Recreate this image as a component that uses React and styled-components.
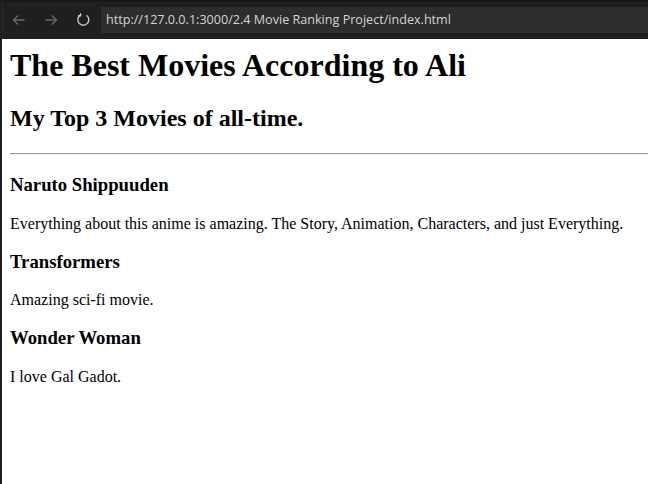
import React from "react";
import styled, { createGlobalStyle } from "styled-components";

const Global = createGlobalStyle`
  html, body { margin: 0; padding: 0; background: #1f1f1f; }
  #root { width: 648px; height: 484px; }
`;

const Window = styled.div`
  width: 648px;
  height: 484px;
  display: flex;
  flex-direction: column;
  background: #1f1f1f;
  border-left: 2px solid #1e1e1e;
  box-sizing: border-box;
  overflow: hidden;
`;

const Toolbar = styled.div`
  height: 39px;
  flex: none;
  display: flex;
  align-items: center;
  box-sizing: border-box;
  background: #1f1f1f;
  border-top: 2px solid #181818;
  border-left: 1px solid #2a2a2a;
  padding-bottom: 2px;
`;

const NavButton = styled.div`
  width: 32px;
  height: 26px;
  display: flex;
  align-items: center;
  justify-content: center;
  flex: none;
  color: ${(p) => (p.$disabled ? "#6a6a6a" : "#c8c8c8")};
`;

const NavGroup = styled.div`
  display: flex;
  align-items: center;
  margin-right: 2px;
`;

const Address = styled.div`
  flex: 1;
  height: 26px;
  background: #2d2d2d;
  display: flex;
  align-items: center;
  padding-left: 5px;
  font-family: "Open Sans", "Noto Sans", sans-serif;
  font-size: 12.6px;
  color: #d4d4d4;
  white-space: nowrap;
`;

const Page = styled.div`
  flex: 1;
  background: #ffffff;
  padding: 0 8px;
  font-family: "Liberation Serif", "Times New Roman", serif;
  color: #000;
  overflow: hidden;
`;

const Title = styled.h1`
  font-size: 32px;
  font-weight: bold;
  margin: 8px 0 21.44px;
`;

const Subtitle = styled.h2`
  font-size: 24px;
  font-weight: bold;
  margin: 19.92px 0 20.5px;
`;

const Rule = styled.hr`
  margin: 8px -8px 19px 0;
  border: none;
  border-top: 1px solid #9a9a9a;
  border-bottom: 1px solid #eeeeee;
  height: 0;
`;

const MovieTitle = styled.h3`
  font-size: 18.72px;
  font-weight: bold;
  margin: 18px 0 18.72px;
`;

const Blurb = styled.p`
  font-size: 16px;
  margin: 16px 0;
`;

const ArrowLeft = () => (
  <svg width="16" height="16" viewBox="0 0 16 16" fill="none" stroke="currentColor" strokeWidth="1.3">
    <path d="M2.5 8h11M7 3.5L2.5 8 7 12.5" />
  </svg>
);

const ArrowRight = () => (
  <svg width="16" height="16" viewBox="0 0 16 16" fill="none" stroke="currentColor" strokeWidth="1.3">
    <path d="M2.5 8h11M9 3.5L13.5 8 9 12.5" />
  </svg>
);

const Refresh = () => (
  <svg width="16" height="16" viewBox="0 0 16 16" fill="none" stroke="currentColor" strokeWidth="1.4">
    <path d="M11.5 3.2A5.5 5.5 0 1 1 5.3 3.1" />
    <path d="M5.6 1.3v2.4H3.2" />
  </svg>
);

const movies = [
  { title: "Naruto Shippuuden", text: "Everything about this anime is amazing. The Story, Animation, Characters, and just Everything." },
  { title: "Transformers", text: "Amazing sci-fi movie." },
  { title: "Wonder Woman", text: "I love Gal Gadot." },
];

export default function App() {
  return (
    <>
      <Global />
      <Window>
        <Toolbar>
          <NavGroup>
            <NavButton $disabled><ArrowLeft /></NavButton>
            <NavButton $disabled><ArrowRight /></NavButton>
            <NavButton><Refresh /></NavButton>
          </NavGroup>
          <Address>http://127.0.0.1:3000/2.4 Movie Ranking Project/index.html</Address>
        </Toolbar>
        <Page>
          <Title>The Best Movies According to Ali</Title>
          <Subtitle>My Top 3 Movies of all-time.</Subtitle>
          <Rule />
          {movies.map((m) => (
            <React.Fragment key={m.title}>
              <MovieTitle>{m.title}</MovieTitle>
              <Blurb>{m.text}</Blurb>
            </React.Fragment>
          ))}
        </Page>
      </Window>
    </>
  );
}
